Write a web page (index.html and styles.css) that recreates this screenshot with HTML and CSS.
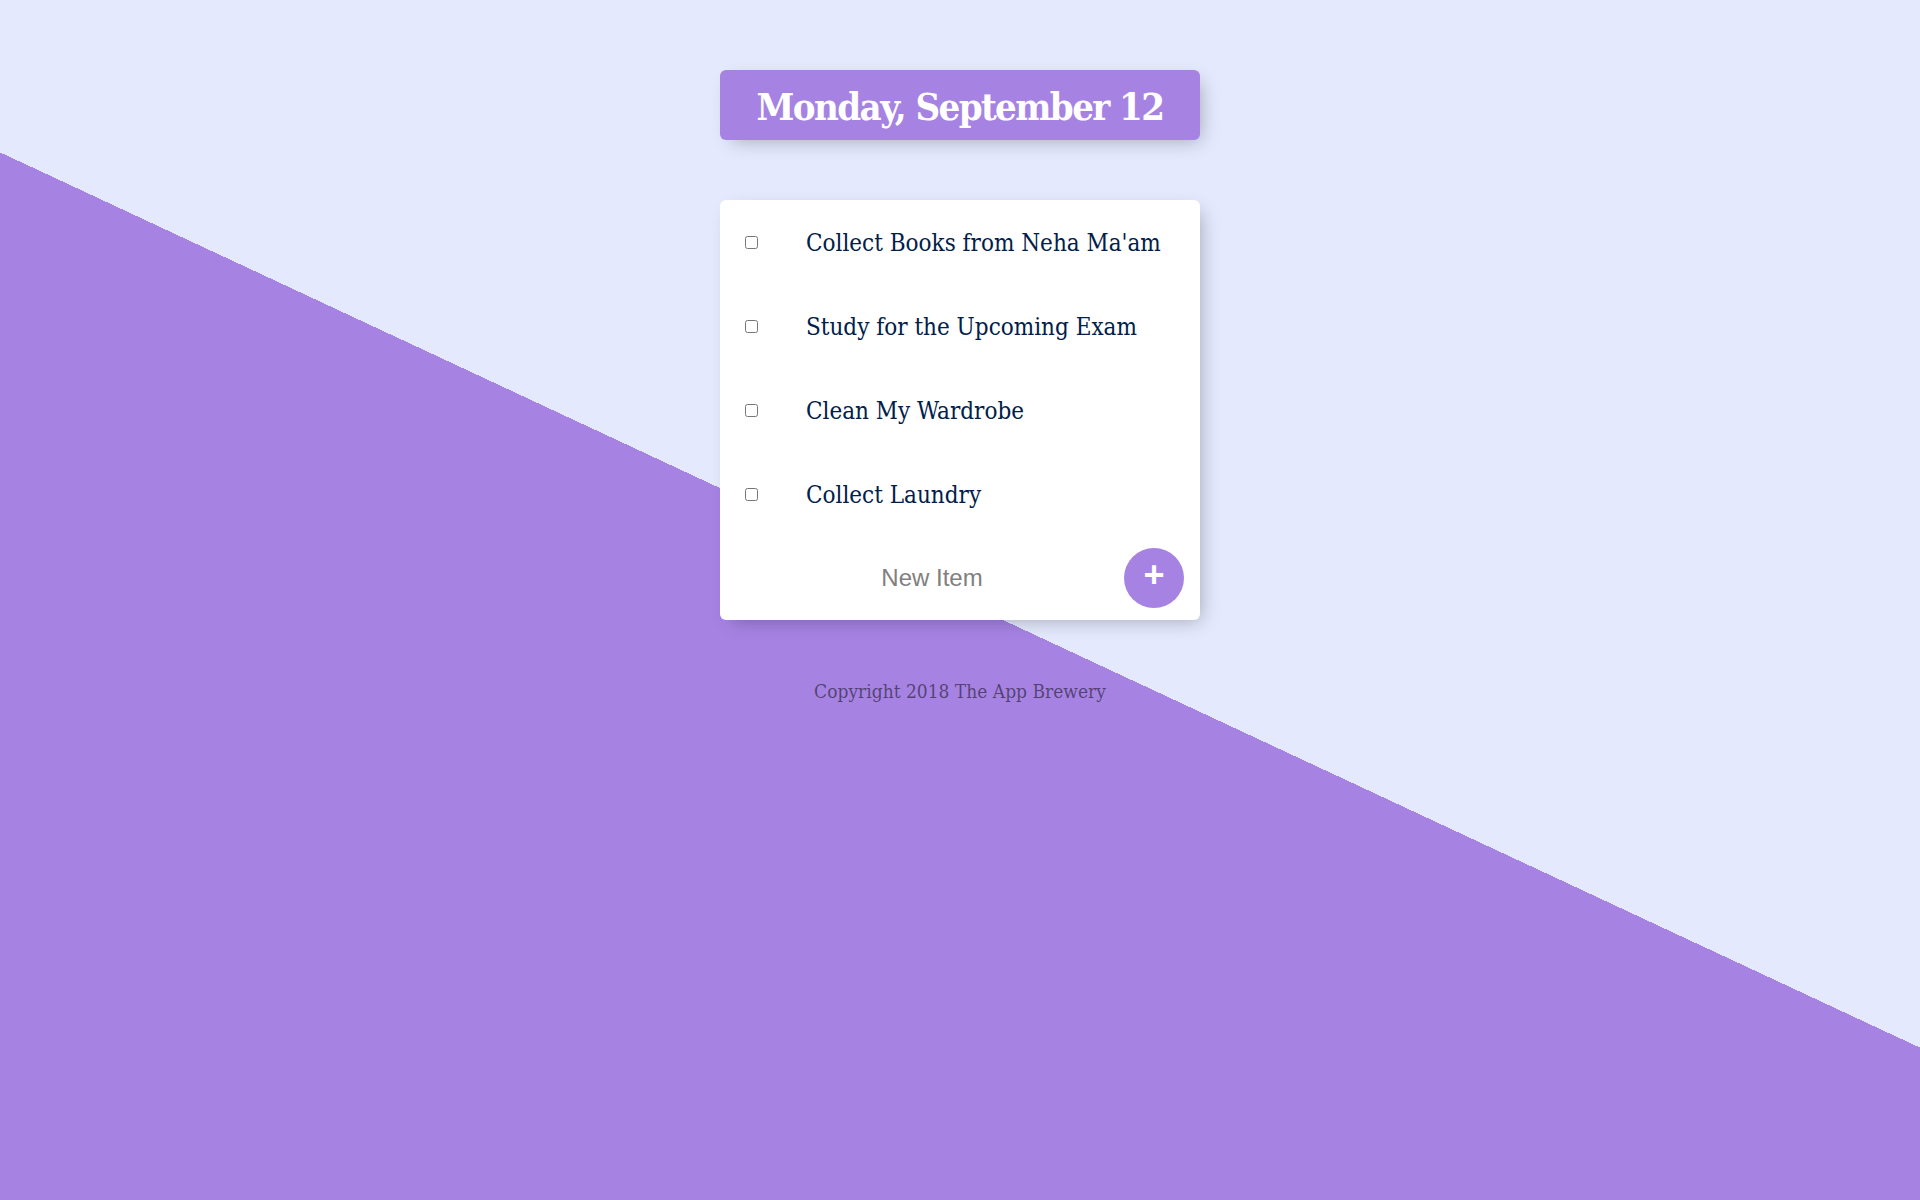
FILE: index.html
```html
<!DOCTYPE html>
<html lang="en">
<head>
<meta charset="utf-8">
<title>To-Do List</title>
<link rel="stylesheet" href="styles.css">
</head>
<body>
  <div class="box heading">
    <h1 class="title">Monday, September 12</h1>
  </div>
  <div class="box list">
    <div class="item">
      <input class="check" type="checkbox">
      <p class="label">Collect Books from Neha Ma'am</p>
    </div>
    <div class="item">
      <input class="check" type="checkbox">
      <p class="label">Study for the Upcoming Exam</p>
    </div>
    <div class="item">
      <input class="check" type="checkbox">
      <p class="label">Clean My Wardrobe</p>
    </div>
    <div class="item">
      <input class="check" type="checkbox">
      <p class="label">Collect Laundry</p>
    </div>
    <form class="item new-form">
      <input class="new-input" type="text" name="newItem" placeholder="New Item" autocomplete="off">
      <button class="add-btn" type="submit" name="list">+</button>
    </form>
  </div>
  <footer class="footer">Copyright 2018 The App Brewery</footer>
</body>
</html>
```

FILE: styles.css
```css
html {
  background-color: #E4E9FD;
  background-image: linear-gradient(25deg, #A683E3 50%, #E4E9FD 50%);
  min-height: 1200px;
}

body {
  margin: 10px;
  font-family: "DejaVu Serif Condensed", "DejaVu Serif", serif;
  font-stretch: condensed;
}

.box {
  width: 480px;
  margin: 60px auto;
  background: #fff;
  border-radius: 6px;
  box-shadow: 6px 6px 18px -6px rgba(0, 0, 0, 0.3);
}

.heading {
  background-color: #A683E3;
  text-align: center;
}

.title {
  margin: 0;
  padding: 14px 12px 10px;
  color: #fff;
  font-size: 38px;
  line-height: 46px;
  font-weight: bold;
  letter-spacing: -1.6px;
}

.item {
  min-height: 84px;
  display: flex;
  align-items: center;
}

.check {
  width: 13px;
  height: 13px;
  margin: 0 24px 0 25px;
  flex: none;
}

.label {
  margin: 0;
  padding: 25px 24px 23px;
  font-size: 24px;
  color: #00204a;
}

.new-form {
  justify-content: flex-start;
  padding-left: 24px;
}

.new-input {
  text-align: center;
  height: 72px;
  width: 376px;
  border: none;
  background: transparent;
  font-family: "Liberation Sans", Arial, sans-serif;
  font-size: 24px;
  padding: 0;
  margin: 0 4px 0 0;
  outline: none;
}

.new-input::placeholder {
  color: grey;
  opacity: 1;
}

.add-btn {
  width: 60px;
  height: 60px;
  border-radius: 50%;
  border: 0;
  background-color: #A683E3;
  color: #fff;
  font-family: "Liberation Sans", Arial, sans-serif;
  font-size: 36px;
  font-weight: bold;
  line-height: 1;
  padding: 0 0 7px;
  flex: none;
}

.footer {
  text-align: center;
  color: rgba(0, 0, 0, 0.5);
  font-size: 19px;
  line-height: 22px;
}
```
